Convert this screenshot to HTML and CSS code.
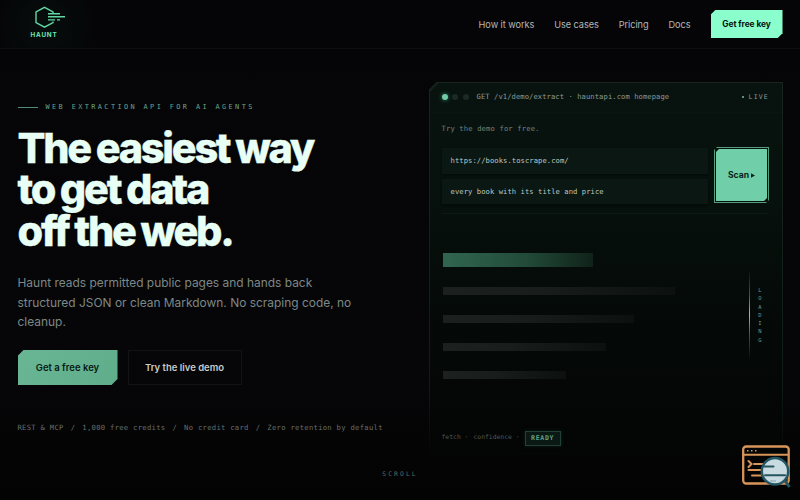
FILE: index.html
```html
<!DOCTYPE html>
<html lang="en">
<head>
<meta charset="utf-8">
<title>Haunt</title>
<link rel="stylesheet" href="styles.css">
</head>
<body>
<header class="nav">
  <a class="logo">
    <svg width="34" height="23" viewBox="0 0 34 23" fill="none" stroke="#62d9a5" stroke-width="1.4">
      <path d="M22 7V6L13.500 1.300L5 6V16.500L13.500 21.200L22 16.500V15.500"/>
      <path d="M17 7.700H29M17 10.800H34M17 13.900H24M26 13.900H29"/>
    </svg>
    <span class="logo-name">HAUNT</span>
  </a>
  <nav class="links">
    <a>How it works</a><a>Use cases</a><a>Pricing</a><a>Docs</a>
    <a class="cta">Get free key</a>
  </nav>
</header>
<main class="hero">
  <section class="copy">
    <div class="eyebrow"><i></i><span>WEB EXTRACTION API FOR AI AGENTS</span></div>
    <h1>The easiest way<br>to get data<br>off the web.</h1>
    <p class="lead">Haunt reads permitted public pages and hands back<br>structured JSON or clean Markdown. No scraping code, no<br>cleanup.</p>
    <div class="actions"><a class="primary">Get a free key</a><a class="secondary">Try the live demo</a></div>
    <div class="facts"><span>REST &amp; MCP</span><b>/</b><span>1,000 free credits</span><b>/</b><span>No credit card</span><b>/</b><span>Zero retention by default</span></div>
  </section>
  <section class="panel">
    <div class="panel-head">
      <i class="dot on"></i><i class="dot"></i><i class="dot"></i>
      <span class="request">GET /v1/demo/extract · hauntapi.com homepage</span>
      <span class="live"><i></i>LIVE</span>
    </div>
    <p class="try">Try the demo for free.</p>
    <div class="form">
      <div class="fields"><div class="field">https://books.toscrape.com/</div><div class="field">every book with its title and price</div></div>
      <div class="scan-frame"><div class="scan">Scan<svg width="4" height="5" viewBox="0 0 4 5"><path d="M0 .3L4 2.500L0 4.700Z" fill="#08251a"/></svg></div></div>
    </div>
    <div class="result">
      <div class="bars"><i class="bar title"></i><i class="bar b1"></i><i class="bar b2"></i><i class="bar b3"></i><i class="bar b4"></i></div>
      <div class="loading"><i></i><span>LOADING</span></div>
    </div>
    <div class="status"><span>fetch ·</span><span class="conf">confidence ·</span><b>READY</b></div>
  </section>
</main>
<div class="scroll">SCROLL</div>
<svg class="badge" width="50" height="44" viewBox="0 0 50 44" fill="none">
  <rect x="1.200" y="1.500" width="45.500" height="37" rx="3" stroke="#d8955a" stroke-width="2.300"/>
  <path d="M1 9.700H47" stroke="#d8955a" stroke-width="2"/>
  <path d="M5 5.700H6.500M9 5.700H10.500M13 5.700H14.500" stroke="#d8955a" stroke-width="1.500"/>
  <path d="M6.500 16L9.500 19L6.500 22M12 19H23M6.500 25H20M10 30.500H21" stroke="#d8955a" stroke-width="2" stroke-linecap="round"/>
  <path d="M42.500 35L47.500 42" stroke="#245562" stroke-width="3"/>
  <circle cx="33" cy="26.300" r="13.200" fill="#c8dbe0" stroke="#245562" stroke-width="2.500"/>
  <path d="M22 21.500H31.500M23 30.200H43" stroke="#245562" stroke-width="2" stroke-linecap="round"/>
  <path d="M28 36H34" stroke="#7ea0a8" stroke-width="1"/>
</svg>
</body>
</html>
```
FILE: styles.css
```css
* { box-sizing: border-box; }
body {
  margin: 0;
  width: 800px;
  height: 500px;
  overflow: hidden;
  position: relative;
  background: linear-gradient(#050507, #060608 75%, #030303);
  color: #b3b8b7;
  font-family: Inter, sans-serif;
  white-space: nowrap;
}
.nav {
  height: 49px;
  border-bottom: 1px solid #0e0f11;
  display: flex;
  justify-content: space-between;
  padding: 0 17.500px 0 18px;
  background: radial-gradient(circle at 45px 25px, #060e0c, transparent 50px);
}
.logo {
  width: 52px;
  padding-top: 6px;
  display: flex;
  flex-direction: column;
  align-items: center;
}
.logo svg { margin-left: 7px; overflow: visible; }
.logo-name {
  margin: 2.500px 0 0;
  font-size: 6.300px;
  line-height: 7px;
  font-weight: 700;
  letter-spacing: .85px;
  color: #6fe6b0;
}
.links { display: flex; align-items: center; font-size: 9.200px; }
.links a { margin-right: 20px; letter-spacing: -.07px; }
.links .cta {
  margin: 0;
  width: 72px;
  height: 28.500px;
  background: #8affcd;
  color: #06130e;
  font-size: 8.400px;
  font-weight: 700;
  letter-spacing: -.08px;
  display: flex;
  align-items: center;
  justify-content: center;
  clip-path: polygon(5px 0, 100% 0, 100% calc(100% - 5px), calc(100% - 5px) 100%, 0 100%, 0 5px);
}
.hero { display: flex; height: 415px; padding-left: 17.500px; }
.copy { width: 411px; padding-top: 52px; }
.eyebrow {
  height: 13px;
  display: flex;
  align-items: center;
  gap: 8px;
  font: 6.900px/13px "DejaVu Sans Mono", monospace;
  letter-spacing: 2.390px;
  color: #6aa48a;
}
.eyebrow i { width: 20px; height: 1px; background: #4b8e73; }
h1 {
  margin: 14px 0 0;
  font-size: 41.400px;
  line-height: 41.400px;
  font-weight: 800;
  letter-spacing: -2.250px;
  word-spacing: -1px;
  -webkit-text-stroke: .35px #e8fff5;
  color: #e8fff5;
}
.lead {
  margin: 21px 0 0;
  font-size: 11.950px;
  line-height: 19.400px;
  color: #7d8886;
}
.actions { display: flex; gap: 10px; margin-top: 18.500px; }
.actions a {
  height: 35px;
  display: flex;
  align-items: center;
  justify-content: center;
  font-size: 9.500px;
  font-weight: 600;
}
.primary {
  width: 100px;
  background: linear-gradient(120deg, #69b695, #60ad8b);
  color: #071b13;
  clip-path: polygon(6px 0, 100% 0, 100% calc(100% - 6px), calc(100% - 6px) 100%, 0 100%, 0 6px);
}
.secondary { width: 114px; border: 1px solid #111315; color: #c8cccb; }
.facts {
  margin-top: 36px;
  display: flex;
  gap: 7px;
  font: 7.200px/13px "DejaVu Sans Mono", monospace;
  letter-spacing: .29px;
  color: #656e6b;
}
.facts b { font-weight: 400; }
.panel {
  width: 354.500px;
  height: 373px;
  margin-top: 33px;
  padding: 0 13px 0 12px;
  border: 1px solid;
  border-bottom: 0;
  border-image: linear-gradient(#18251f, #101d17 80%, transparent) 1;
  background:
    linear-gradient(135deg, #13201b 6px, transparent 6.500px),
    linear-gradient(#08130f, #07120e 25%, #050c09 50%, #040706 80%, #040505);
  clip-path: polygon(8px 0, 100% 0, 100% 100%, 0 100%, 0 8px);
}
.panel-head {
  height: 30px;
  margin: 0 -13px 0 -12px;
  padding: 0 13px 1px 12px;
  display: flex;
  align-items: center;
  border-bottom: 1px solid #09150f;
  font: 7.200px/12px "DejaVu Sans Mono", monospace;
  color: #8b9a94;
}
.dot { width: 6px; height: 6px; border-radius: 50%; margin-right: 4.700px; background: #1c2925; }
.dot.on { background: #70cba6; box-shadow: 0 0 4px #3a8868; }
.request { margin-left: 3px; letter-spacing: .05px; }
.live {
  margin-left: auto;
  display: flex;
  align-items: center;
  gap: 5px;
  font-size: 6.500px;
  letter-spacing: 1.200px;
}
.live i { width: 2px; height: 2px; background: #648e7d; }
.try {
  margin: 9px 0 0;
  font: 7.200px/13px "DejaVu Sans Mono", monospace;
  letter-spacing: .13px;
  color: #73827c;
}
.form {
  margin-top: 12px;
  height: 67px;
  display: flex;
  justify-content: space-between;
  border-bottom: 1px solid #0c1914;
}
.fields { display: flex; flex-direction: column; gap: 5px; padding-top: 1px; }
.field {
  width: 266px;
  height: 25.500px;
  padding-left: 8px;
  border: 1px solid #0a1713;
  background: #0a1712;
  box-shadow: 0 1px 2px #030906;
  font: 7.200px/23px "DejaVu Sans Mono", monospace;
  letter-spacing: .05px;
  color: #bdc9c3;
}
.scan-frame {
  width: 55px;
  height: 56px;
  border: 1px solid #579c7e;
  padding: 1px;
  clip-path: polygon(3px 0, 100% 0, 100% calc(100% - 3px), calc(100% - 3px) 100%, 0 100%, 0 3px);
}
.scan {
  width: 51px;
  height: 52px;
  display: flex;
  align-items: center;
  justify-content: center;
  gap: 2px;
  background: #70cfa8;
  color: #08251a;
  font-size: 8.600px;
  font-weight: 700;
  clip-path: polygon(3px 0, 100% 0, 100% calc(100% - 3px), calc(100% - 3px) 100%, 0 100%, 0 3px);
}
.result { height: 215px; padding: 39px 6px 0 1px; display: flex; justify-content: space-between; }
.bars { display: flex; flex-direction: column; gap: 20px; }
.bar { height: 8px; background: linear-gradient(90deg, #1c211f, #191e1c 40%, #0c110f); }
.bar.title { width: 150px; height: 14px; background: linear-gradient(90deg, #306650, #224b39 55%, #102219); }
.b1 { width: 232px; }
.b2 { width: 191px; }
.b3 { width: 163px; }
.b4 { width: 123px; }
.loading { display: flex; gap: 6px; padding-top: 16px; }
.loading i {
  width: 1.500px;
  height: 91px;
  background: linear-gradient(transparent, #2f6650 30%, #86cbb0 50%, #2f6650 70%, transparent);
}
.loading span {
  writing-mode: vertical-rl;
  text-orientation: upright;
  font: 5.400px/7px "DejaVu Sans Mono", monospace;
  letter-spacing: 2.250px;
  padding-top: 17.500px;
  color: #729a87;
}
.status {
  height: 23px;
  display: flex;
  align-items: center;
  margin-top: -4px;
  font: 6.400px/12px "DejaVu Sans Mono", monospace;
  color: #4e5955;
}
.status .conf { margin-left: 5px; }
.status b {
  margin: 3px 0 0 5px;
  width: 36px;
  height: 15px;
  border: 1px solid #224034;
  background: #0a1913;
  box-shadow: 0 0 4px #0a2118;
  font-size: 6.600px;
  line-height: 13px;
  letter-spacing: .65px;
  text-align: center;
  color: #62a486;
}
.scroll {
  text-align: center;
  font: 6.300px/12px "DejaVu Sans Mono", monospace;
  letter-spacing: 2.100px;
  color: #606a66;
  margin-top: 4px;
}
.badge { position: absolute; left: 742px; top: 445px; }
```
